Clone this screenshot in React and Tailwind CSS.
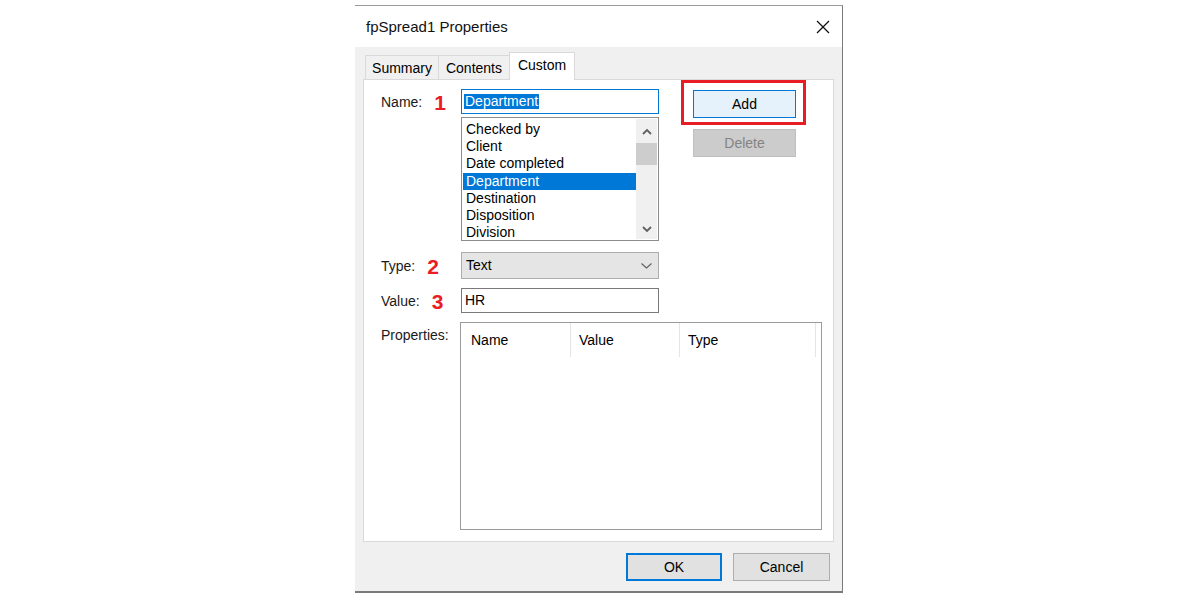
import { useState } from "react";

const listItems = [
  "Checked by",
  "Client",
  "Date completed",
  "Department",
  "Destination",
  "Disposition",
  "Division",
];

function Chevron({ up }) {
  return (
    <svg width="10" height="7" viewBox="0 0 10 7" className="block">
      <polyline
        points={up ? "1,6 5,2 9,6" : "1,1 5,5 9,1"}
        fill="none"
        stroke="#606060"
        strokeWidth="1.8"
      />
    </svg>
  );
}

function FieldLabel({ text, num }) {
  return (
    <div className="w-[80px] shrink-0 flex items-center pt-[1px]">
      <span className="text-[#1a1a1a]">{text}</span>
      {num && (
        <span className="ml-[12px] text-[21px] leading-none font-bold text-[#ea1c24]">
          {num}
        </span>
      )}
    </div>
  );
}

function App() {
  const [selected, setSelected] = useState("Department");

  return (
    <div className="w-full h-[600px] bg-white font-['Liberation_Sans',Arial,sans-serif] text-[14px] text-black pt-[5px]">
      <div className="ml-[355px] w-[488px] border-t border-t-[#9a9a9a] border-r border-r-[#7a7a7a] border-b-2 border-b-[#7a7a7a]">
        {/* title bar */}
        <div className="h-[41px] bg-white flex items-center justify-between pl-[11px] pr-[12px] pt-[1px]">
          <span className="text-[15px] text-[#111]">fpSpread1 Properties</span>
          <svg width="14" height="14" viewBox="0 0 14 14">
            <line x1="1" y1="1" x2="13" y2="13" stroke="#111" strokeWidth="1.3" />
            <line x1="13" y1="1" x2="1" y2="13" stroke="#111" strokeWidth="1.3" />
          </svg>
        </div>

        <div className="bg-[#f0f0f0] px-[8px] pt-[5px] pb-[10px]">
          {/* tabs */}
          <div className="flex items-end h-[27px] pl-[2px]">
            <div className="w-[73px] h-[24px] border-t border-l border-[#d9d9d9] flex items-center justify-center pt-[1px]">
              Summary
            </div>
            <div className="w-[71px] h-[24px] border-t border-l border-[#d9d9d9] flex items-center justify-center pt-[1px]">
              Contents
            </div>
            <div className="relative z-10 w-[66px] h-[28px] -mb-px bg-white border-t border-l border-r border-[#d9d9d9] flex items-center justify-center pb-[3px]">
              Custom
            </div>
          </div>

          {/* tab panel */}
          <div className="h-[463px] bg-white border border-[#d9d9d9] pl-[17px] pt-[9px]">
            <div className="flex">
              <div className="w-[278px]">
                <div className="flex items-center h-[25px]">
                  <FieldLabel text="Name:" num="1" />
                  <div className="w-[198px] h-[25px] border border-[#0078d7] flex items-center pl-[2px]">
                    <span className="bg-[#0078d7] text-white leading-[15px] px-[1px]">Department</span>
                  </div>
                </div>

                <div className="ml-[80px] mt-[3px] w-[198px] h-[124px] border border-[#8c8c8c] p-[1px] flex">
                  <div className="flex-1 pt-[2px]">
                    {listItems.map((item) => (
                      <div
                        key={item}
                        onClick={() => setSelected(item)}
                        className={
                          "h-[17.2px] leading-[17px] pl-[3px] " +
                          (item === selected ? "bg-[#0078d7] text-white" : "")
                        }
                      >
                        {item}
                      </div>
                    ))}
                  </div>
                  <div className="w-[21px] bg-[#f0f0f0] flex flex-col">
                    <div className="h-[24px] flex items-center justify-center">
                      <Chevron up />
                    </div>
                    <div className="h-[22px] bg-[#cdcdcd]" />
                    <div className="flex-1" />
                    <div className="h-[20px] flex items-center justify-center">
                      <Chevron />
                    </div>
                  </div>
                </div>

                <div className="flex items-center h-[27px] mt-[11px]">
                  <FieldLabel text="Type:" num="2" />
                  <div className="w-[198px] h-[27px] bg-[#e5e5e5] border border-[#adadad] flex items-center justify-between pl-[4px] pr-[6px]">
                    <span>Text</span>
                    <svg width="11" height="6" viewBox="0 0 11 6">
                      <polyline points="0.5,0.5 5.5,5 10.5,0.5" fill="none" stroke="#606060" strokeWidth="1.1" />
                    </svg>
                  </div>
                </div>

                <div className="flex items-center h-[25px] mt-[9px]">
                  <FieldLabel text="Value:" num="3" />
                  <div className="w-[198px] h-[25px] bg-white border border-[#7a7a7a] flex items-center pl-[3px]">
                    HR
                  </div>
                </div>
              </div>

              <div className="ml-[34px] pt-[1px]">
                <div className="relative w-[103px] h-[28px] bg-[#e5f1fb] border border-[#0078d7] flex items-center justify-center">
                  Add
                  <div className="absolute left-[-13px] right-[-11px] top-[-11px] bottom-[-8px] border-[3px] border-[#e81c24]" />
                </div>
                <div className="mt-[11px] w-[103px] h-[28px] bg-[#cccccc] border border-[#bfbfbf] text-[#838383] flex items-center justify-center">
                  Delete
                </div>
              </div>
            </div>

            <div className="flex mt-[9px]">
              <div className="w-[79px] pt-[3px] text-[#1a1a1a]">Properties:</div>
              <div className="w-[362px] h-[208px] border border-[#9a9a9a] bg-white">
                <div className="flex h-[34px]">
                  <div className="w-[110px] border-r border-[#e5e5e5] pl-[10px] flex items-center">Name</div>
                  <div className="w-[109px] border-r border-[#e5e5e5] pl-[8px] flex items-center">Value</div>
                  <div className="w-[136px] border-r border-[#e5e5e5] pl-[8px] flex items-center">Type</div>
                </div>
              </div>
            </div>
          </div>

          {/* footer buttons */}
          <div className="flex justify-end gap-[11px] mt-[11px] pr-[4px]">
            <div className="w-[96px] h-[28px] bg-[#e1e1e1] border-2 border-[#0078d7] flex items-center justify-center">
              OK
            </div>
            <div className="w-[97px] h-[28px] bg-[#e1e1e1] border border-[#adadad] flex items-center justify-center">
              Cancel
            </div>
          </div>
        </div>
      </div>
    </div>
  );
}

export default App;
